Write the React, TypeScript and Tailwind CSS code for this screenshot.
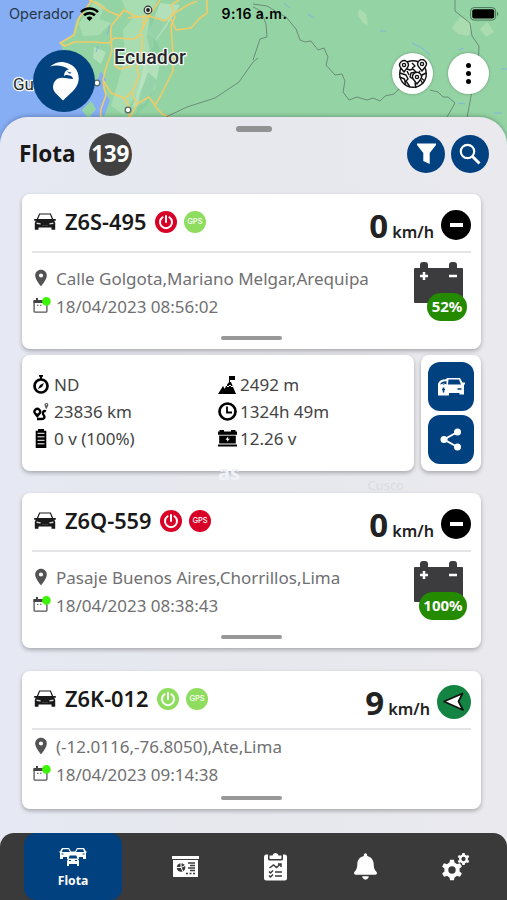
import type { ReactNode } from 'react';
import clsx from 'clsx';
import { FaBell } from 'react-icons/fa';
import { MdLocationOn } from 'react-icons/md';

type Vehicle = {
  plate: string;
  engineOn: boolean;
  gpsOn: boolean;
  speed: number;
  address: string;
  date: string;
  battery?: string;
};

const vehicles: Vehicle[] = [
  { plate: 'Z6S-495', engineOn: false, gpsOn: true, speed: 0, address: 'Calle Golgota,Mariano Melgar,Arequipa', date: '18/04/2023 08:56:02', battery: '52%' },
  { plate: 'Z6Q-559', engineOn: false, gpsOn: false, speed: 0, address: 'Pasaje Buenos Aires,Chorrillos,Lima', date: '18/04/2023 08:38:43', battery: '100%' },
  { plate: 'Z6K-012', engineOn: true, gpsOn: true, speed: 9, address: '(-12.0116,-76.8050),Ate,Lima', date: '18/04/2023 09:14:38' },
];

function MapBackground() {
  return (
    <svg className="absolute left-0 top-0" width="507" height="160" viewBox="0 0 507 160">
      <rect width="507" height="160" fill="#94d4a4" />
      <path d="M0 0H92L84 11 76 20 73 34 60 43 65 55 70 70 92 82 103 86 101 100 99 160H0Z" fill="#86aef4" />
      <path d="M101 71l5 9-4 8 8 12-6 17-8-8 4-12-5-11z" fill="#86aef4" />
      <path d="M82 110l9-9 5 8-8 10z" fill="#94d4a4" />
      <path d="M95 0l10 6-6 13 12 4-12 12-16 1-4-12zM122 0h35l-8 18 5 28-11 14 7 16-13 18-14 20-12-8 6-20 8-30-2-26 10-12-8-10z" fill="#b5e3bd" opacity=".6" />
      <path d="M160 3l20 2-14 22-10 14-8-7zM146 54l14 9-5 25-11 16-12 4 8-25zM94 47l12 5-5 12-8-6z" fill="#bfe6c5" opacity=".7" />
      <path d="M150 15l18 6-12 18 5 14-9 8-5-24zM148 72l9 8-9 24-12 12 4-22z" fill="#82c99b" opacity=".55" />
      <path d="M359 9l7 5 2 11-5-2-5-8zM460 17l12 5-3 14-11-2-6-6zM487 22l7 10-8 5-6-8z" fill="#b5e0b4" opacity=".7" />
      <g fill="none" stroke="#7eb6d9" strokeWidth="1">
        <path d="M284 3l6 5M308 14l6 4M380 31h6M412 43l10 5 8 7M458 50l6-2M501 69h6M494 113h8M458 103l7 1M110 25l-3 10M98 46l-2 6" />
      </g>
      <g fill="none" stroke="#f0cb68" strokeWidth="1.6" strokeLinejoin="round">
        <path d="M92 0L87 7 79 18 74 35 60 43 65 46 74 42 91 42 109 43 114 38 134 39 139 36 142 29 150 14 160 0" />
        <path d="M89 0l9 4 10 7 12 5 4-6 13 7 12-1 16 5 8-7 15-9 9-4M124 10l-13 16 0 13 1 12-6 17-3 12 8 13 13 5 6 10-3 24" />
        <path d="M142 34l0 15-5 18 2 9-7 16-8 7M132 93l5 11 12-7 6 8 5-8 13-26 0-17-2-28 4-9-4-12 11-7 14-17M171 19l5 11 15-2 9-10 7-5 0-13" />
        <path d="M103 82l3 13-5 14-1 12M137 104l-6 12-1 6M154 105l8 9 10 4M128 18l16-2-1 14M114 65l6 4 12-3" />
      </g>
      <g fill="none" stroke="#6c8c78" strokeWidth="1" strokeLinejoin="round">
        <path d="M258 58l-5 4-14 20-24 16-28 9-21 10M253 7l8 4 5 13 1 13-7 2-7 21M253 4l14 2 15 9 4 2 10 12 4 11 5 2 6-1 7 9 6-2 4 9-2 8 9 10 7-1 3 7-2 11 6 8 8-3 10 3 6-2 7 3 5-5 9-2 7-7 8-2M430 90l8 2 5 5 5 0 7 6-8 14M455 0l0 11 15 12 2 13 7 10-1 25-7 25-4 22" />
      </g>
      <g fill="#fff" stroke="#596b65" strokeWidth="1.3">
        <circle cx="97" cy="83" r="2.8" />
        <circle cx="128" cy="110" r="2.8" />
      </g>
      <circle cx="148" cy="10" r="3.8" fill="#d5ead8" stroke="#333" strokeWidth="1.2" />
      <circle cx="148" cy="10" r="1.9" fill="#222" />
      <g fill="#26282b" stroke="#f4f8f4" strokeWidth="2.6" paintOrder="stroke" strokeLinejoin="round" fontFamily="Roboto, sans-serif">
        <text x="114" y="64" fontSize="19.5" fontWeight="500" textLength="72">Ecuador</text>
        <text x="13" y="90" fontSize="17">Guayaquil</text>
      </g>
    </svg>
  );
}

function StatusBar() {
  return (
    <div className="flex h-7 items-center justify-between pl-[9px] pr-[7px] font-[Inter,sans-serif] text-[14px] text-[#15201b]">
      <div className="flex w-[200px] items-center gap-1.5">
        <span className="w-[65px] text-[14.5px] text-[#26374a]">Operador</span>
        <svg width="19" height="14" viewBox="0 0 19 14" fill="none" stroke="#000" strokeWidth="2.6">
          <path d="M1 5.1a12 12 0 0 1 17 0" />
          <path d="M4 8.3a8 8 0 0 1 11 0" />
          <path d="M9.500 14l-3-3.100a4.300 4.300 0 0 1 6 0z" fill="#000" stroke="none" />
        </svg>
      </div>
      <span className="-mt-px whitespace-nowrap text-[14px] font-semibold tracking-[0.5px] text-black">9:16 a.m.</span>
      <div className="flex w-[200px] justify-end">
        <svg className="-mt-px" width="30" height="14" viewBox="0 0 30 14">
          <rect x=".6" y=".6" width="25" height="12.500" rx="3.500" fill="none" stroke="#4b7558" />
          <rect x="2.200" y="2.300" width="22" height="9.200" rx="2" />
          <path d="M27 4.500q2.600 2.400 0 4.800z" fill="#4b7558" />
        </svg>
      </div>
    </div>
  );
}

function EagleLogo() {
  return (
    <div className="flex size-[62px] items-center justify-center rounded-full bg-[#02427f]">
      <svg width="62" height="62" viewBox="0 0 62 62">
        <path
          d="M17 16.500C22 12.500 27 11.500 31 12.200C40 13.500 46 20 45.700 29C45.500 34 43 38 40 41L30 50.500L22.500 43C18.500 39 19.500 31.500 25 28.500C29 26.500 34 28.500 40 29C40 26.500 37.500 25.500 34 25C33 24.700 32 25 31.500 26.500C30.500 23 32.500 20 36 19.500C31 16 24 14.500 17 16.500Z"
          fill="#fff"
        />
        <path d="M33.500 21.300l5 1.400-1.500 1.100z" fill="#02427f" />
      </svg>
    </div>
  );
}

function GlobeIcon() {
  return (
    <svg width="30" height="30" viewBox="0 0 30 30" fill="none" stroke="#111" strokeWidth="1.4" strokeLinejoin="round">
      <circle cx="15" cy="15" r="13.300" />
      <path d="M2 14l6 2 2 4-2 2 4 6M1.500 18l5 2 1 6M9 10l3 1 3-1 3 3-5 1-1 4 3 2M14 4l3 3-3 2M22 12l-2 3M28 14l-4 2-1 3 4 3M20 22l-3 2 1 5M22 20l3 5M11 16l-2-4" />
      <g fill="#fff">
        <path d="M6 13L2.500 8.500a4.300 4.300 0 1 1 7 0z" />
        <path d="M24 12l-3.500-4.500a4.300 4.300 0 1 1 7 0z" />
        <path d="M19 25l-3.500-4.500a4.400 4.400 0 1 1 7 0z" />
      </g>
      <circle cx="6" cy="6" r="1.600" />
      <circle cx="24" cy="5" r="1.600" />
      <circle cx="19" cy="18" r="1.600" />
    </svg>
  );
}

function RoundButton({ children, className }: { children: ReactNode; className: string }) {
  return <button className={clsx('flex items-center justify-center rounded-full', className)}>{children}</button>;
}

function CarIcon() {
  return (
    <svg className="w-[22px]" width="22" height="17" viewBox="0 0 22 17" fill="#191919">
      <path d="M5.200.6h11.600l2.400 5.400h2.600v1.800h-1.600l1 2V16.800h-3.700v-2.300h-13v2.300H.8v-7l1-2H.2V6h2.600z" />
      <path d="M6 1.600h10L17.800 6H4.200z" fill="#fff" />
      <path d="M2.600 9.400l4 .9v1.300l-4-.7zM19.400 9.400l-4 .9v1.300l4-.7z" fill="#ddd" />
      <path d="M8 12.500h6" stroke="#555" strokeWidth=".6" />
    </svg>
  );
}

function PowerBadge({ on }: { on: boolean }) {
  return (
    <span className={clsx('flex size-[22px] items-center justify-center rounded-full', on ? 'bg-[#8edd5f]' : 'bg-[#d80027]')}>
      <svg width="16" height="16" viewBox="0 0 16 16" fill="none" stroke="#fff" strokeWidth="2" strokeLinecap="round">
        <path d="M4.600 3.200a6 6 0 1 0 6.800 0M8 2v6" />
      </svg>
    </span>
  );
}

function GpsBadge({ on }: { on: boolean }) {
  return (
    <span className={clsx('flex size-[22px] items-center justify-center rounded-full pt-px font-[Inter,sans-serif] text-[7.500px] font-medium leading-none text-white', on ? 'bg-[#8edd5f]' : 'bg-[#d80027]')}>
      GPS
    </span>
  );
}

function CalendarIcon() {
  return (
    <svg className="-ml-px mb-[3px] w-[18px]" width="18" height="17" viewBox="0 0 18 17">
      <rect x="1.100" y="3.600" width="12.800" height="11.600" rx="1" fill="none" stroke="#555" strokeWidth="1.300" />
      <path d="M.5 3h14v3H.5zM3 1h2v3H3z" fill="#444" />
      <path d="M4 8.300h1.500M7 8.300h1.500" stroke="#777" strokeWidth="1.300" />
      <circle cx="13.400" cy="4.400" r="4.300" fill="#3bf505" />
    </svg>
  );
}

function BatteryBadge({ value }: { value: string }) {
  return (
    <div className="relative h-[59px] w-[53px]">
      <svg width="49" height="41" viewBox="0 0 49 41" fill="#3c3c3e">
        <rect y="6" width="49" height="35" rx="1" />
        <rect x="6" width="8" height="12" rx="3" />
        <rect x="35" width="8" height="12" rx="3" />
        <path d="M6 14h8M10 10v8M35 14h8" stroke="#fff" strokeWidth="2.500" />
      </svg>
      <span className={clsx('absolute bottom-0 right-0 flex h-[28px] items-center justify-center rounded-full bg-[#248a00] pb-px text-[15px] font-bold text-white', value.length > 3 ? 'w-12' : 'w-10')}>
        {value}
      </span>
    </div>
  );
}

function SpeedMarker({ moving }: { moving: boolean }) {
  if (moving) {
    return (
      <span className="flex size-[34px] items-center justify-center rounded-full bg-[#148443]">
        <svg width="24" height="22" viewBox="0 0 24 22">
          <path d="M2 10.500L20.500 2.500L16.500 10.500L21 19Z" fill="#fff" stroke="#111" strokeWidth="1.700" strokeLinejoin="round" />
        </svg>
      </span>
    );
  }
  return (
    <span className="flex size-[30px] items-center justify-center rounded-full bg-black">
      <span className="h-1 w-[13px] bg-white" />
    </span>
  );
}

function VehicleCard({ vehicle }: { vehicle: Vehicle }) {
  const moving = vehicle.speed > 0;
  return (
    <article className={clsx('flex flex-col rounded-lg bg-white px-2.5 shadow-[0_2px_4px_rgba(0,0,0,0.28)]', moving ? 'h-[138px]' : 'h-[155px]')}>
      <div className="flex h-[59px] justify-between border-b-2 border-[#e5e5e7] pl-0.5">
        <div className="flex h-[55px] items-center">
          <CarIcon />
          <h2 className="ml-[9px] mr-[8.500px] text-[21.800px] font-semibold leading-none text-[#191919]">{vehicle.plate}</h2>
          <div className="flex gap-[7px]">
            <PowerBadge on={vehicle.engineOn} />
            <GpsBadge on={vehicle.gpsOn} />
          </div>
        </div>
        <div className="flex h-[62px] items-center">
          <div className="flex items-baseline gap-1 text-[#222]">
            <span className="text-[33px] font-bold leading-none">{vehicle.speed}</span>
            <span className="text-[16.200px] font-semibold leading-none">km/h</span>
          </div>
          <div className="ml-[7px]">
            <SpeedMarker moving={moving} />
          </div>
        </div>
      </div>
      <div className="flex justify-between pl-0.5">
        <div className={clsx('flex flex-col text-[17px] text-[#707072]', moving ? 'pt-[3px]' : 'pt-3')}>
          <div className="flex h-7 items-center">
            <MdLocationOn className="mb-0.5 ml-[-3.500px] mr-[5.500px] size-5 text-[#535353]" />
            <span>{vehicle.address}</span>
          </div>
          <div className="flex h-7 items-center gap-[5px]">
            <CalendarIcon />
            <span>{vehicle.date}</span>
          </div>
        </div>
        {vehicle.battery && (
          <div className="pr-1 pt-[9px]">
            <BatteryBadge value={vehicle.battery} />
          </div>
        )}
      </div>
      <div className="mb-[9px] mt-auto h-1 w-[61px] self-center rounded-full bg-[#989898]" />
    </article>
  );
}

const stats: { icon: ReactNode; text: string }[] = [
  {
    text: 'ND',
    icon: (
      <>
        <circle cx="8" cy="11" r="6.500" fill="none" stroke="#000" strokeWidth="2.700" />
        <path d="M6 0h4v1.800H6zM7 1h2v3H7z" />
        <path d="M11 8l-2 4-4 2 2-4z" />
      </>
    ),
  },
  {
    text: '2492 m',
    icon: (
      <>
        <path d="M11 1h6v4h-5v3h-1zM8 11l3-4 2 0 5 12H8l-2-3zM5 11l5 8H0z" />
        <path d="M8 10l2 2 2-2 2 2 1-1" fill="none" stroke="#fff" strokeWidth="1" />
      </>
    ),
  },
  {
    text: '23836 km',
    icon: (
      <>
        <path d="M4.300 16L1 12a4 4 0 1 1 6.600 0z" />
        <circle cx="4.300" cy="9.800" r="1.700" fill="#fff" />
        <path d="M4 17h4.500c3.500 0 3.500-2.500 1.800-4.500-1.300-1.800.5-4.300 2.500-3" fill="none" stroke="#000" strokeWidth="2.400" />
        <path d="M13.300 7.500l-1.600-3.800a1.900 1.900 0 1 1 3.400 0z" fill="#555" />
        <circle cx="13.400" cy="2.700" r=".7" fill="#fff" />
      </>
    ),
  },
  {
    text: '1324h 49m',
    icon: (
      <g fill="none" stroke="#000">
        <circle cx="9.500" cy="9.500" r="8" strokeWidth="2.700" />
        <path d="M9 4.500v6h5" strokeWidth="1.800" />
      </g>
    ),
  },
  {
    text: '0 v (100%)',
    icon: (
      <>
        <path d="M5 0h6v1.800h2.300V19H2.700V1.800H5z" />
        <path d="M4.500 4.300h7M4.500 7.800h7M4.500 11.300h7M4.500 14.800h7" stroke="#fff" strokeWidth="1" />
      </>
    ),
  },
  {
    text: '12.26 v',
    icon: (
      <>
        <path d="M1.500 1h4.500v1.500h7V1h4.500v1.500H19V6H0V2.500h1.500zM1.200 6.300h16.600V14.500H1.200zM0 15.500h19v2H0z" />
        <path d="M0 6.200h19" stroke="#fff" strokeWidth=".7" />
        <path d="M10.200 7.500L7.500 10.800h1.800l-.4 2.200 2.900-3.200H10z" fill="#fff" />
      </>
    ),
  },
];

function VehicleDetails() {
  return (
    <div className="mt-1.5 flex gap-[7px]">
      <div className="grid h-[116px] w-[392px] auto-rows-[27px] grid-cols-[185px_1fr] rounded-lg bg-white pl-[11px] pt-4 text-[17px] text-[#444] shadow-[0_2px_4px_rgba(0,0,0,0.28)]">
        {stats.map((stat, i) => (
          <div key={stat.text} className={clsx('flex items-center', i % 2 ? 'gap-[3px]' : 'gap-[5px]')}>
            <svg width={i % 2 ? 19 : 16} height="19" viewBox={i % 2 ? '0 0 19 19' : '0 0 16 19'}>
              {stat.icon}
            </svg>
            <span>{stat.text}</span>
          </div>
        ))}
      </div>
      <div className="flex h-[116px] w-[60px] flex-col items-center gap-1 rounded-lg bg-white pt-[7px] shadow-[0_2px_4px_rgba(0,0,0,0.28)]">
        <button className="flex h-[49px] w-[46px] items-center justify-center rounded-xl bg-[#02417f]">
          <svg width="28" height="20" viewBox="0 0 28 20" fill="#fff">
            <path d="M1 8C1 4.500 4 2.500 8 2.500L10.500 1H23l2.500 4.500H28v1.500l-1 1V17.500h-4.500V16H12v2.500H1z" />
            <path d="M11.500 2.500h10.500l2 5H11zM3 7.500C4 5 6.500 4 9.500 4.200V8H3z" fill="#02417f" />
            <path d="M6.500 10.500v5M5 12.500h3M20.500 12h4" stroke="#02417f" strokeWidth="1.500" />
            <path d="M3 8Q7 6 10 8" stroke="#fff" strokeWidth="1" fill="none" />
          </svg>
        </button>
        <button className="flex h-[49px] w-[46px] items-center justify-center rounded-xl bg-[#02417f]">
          <svg width="22" height="23" viewBox="0 0 22 23" fill="#fff">
            <path d="M17.500 4L4 11.500 17.500 19" fill="none" stroke="#fff" strokeWidth="2" />
            <circle cx="17.500" cy="4" r="3.500" />
            <circle cx="4" cy="11.500" r="3.500" />
            <circle cx="17.500" cy="19" r="3.500" />
          </svg>
        </button>
      </div>
    </div>
  );
}

function FleetIcon() {
  return (
    <svg width="28" height="18" viewBox="0 0 28 18" fill="#fff">
      <path d="M3 0h7l2 3.500h4L18 0h7l2 3.500h1L27 5v6h-3V9h-4v2h-1l1 2v5h-2v-2h-8v2H8v-5l1-2H8V9H4v2H1V5L0 3.500h1z" />
      <path d="M4 1.200h5.500L11 4H2.700zM18.500 1.200H24L25.300 4H17z" fill="#02417f" />
      <path d="M10.700 7.500h6.600l1.200 3h-9z" fill="#02417f" />
      <path d="M2.500 6h2M23.500 6h2M10 12.500h2M16 12.500h2" stroke="#02417f" strokeWidth="1" />
    </svg>
  );
}

function ReportIcon() {
  return (
    <svg width="27" height="22" viewBox="0 0 27 22">
      <path d="M0 0h27v3H0zM1 4h25v17H1z" fill="#fff" />
      <circle cx="9" cy="11.500" r="4.300" fill="#3a3a3a" />
      <path d="M9 7v4.500l4-2M9 11.500l2 4M9 11.500H4" stroke="#fff" strokeWidth="1" fill="none" />
      <path d="M16 7h7M18 9.500h5M16 12h7M18 14.500h5M14 17.500h2M17.500 17.500h2M21 17.500h2" stroke="#3a3a3a" strokeWidth="1.300" />
    </svg>
  );
}

function ChecklistIcon() {
  return (
    <svg width="23" height="28" viewBox="0 0 23 28">
      <rect y="1.500" width="23" height="26" rx="2.500" fill="#fff" />
      <path d="M4 1h15v5q0 1.500-2 1.500H6Q4 7.500 4 6z" fill="#3a3a3a" />
      <path d="M5.500 2.500h3Q9 0 11.500 0T14.500 2.500h3V5q0 1-1 1h-10q-1 0-1-1z" fill="#fff" />
      <g fill="none" stroke="#3a3a3a" strokeWidth="1.500">
        <path d="M5.500 15l4-3 3 2.500 4-3.500M14 11h3v3M11 19h7M11 23h7" />
        <path d="M5 18.500l1.500 1.500L9 17.500M5 22.500l1.500 1.500L9 21.500" />
      </g>
    </svg>
  );
}

const gearTeeth = [0, 60, 120, 180, 240, 300];

function Gear({ x, y, scale }: { x: number; y: number; scale: number }) {
  return (
    <g transform={`translate(${x} ${y}) scale(${scale})`}>
      <circle r="5.700" fill="none" stroke="#fff" strokeWidth="4" />
      {gearTeeth.map((angle) => (
        <path key={angle} d="M-2.600 -7L-1.900 -10.300H1.900L2.600 -7Z" fill="#fff" transform={`rotate(${angle})`} />
      ))}
    </g>
  );
}

function BottomNav() {
  return (
    <nav className="flex h-[67px] rounded-t-[14px] bg-[#3a3a3a] pl-6">
      <button className="mr-[18px] flex w-[98px] flex-col items-center rounded-xl bg-[#02417f] pt-[15px] text-white">
        <FleetIcon />
        <span className="mt-1.5 text-[12.200px] font-bold leading-[18px]">Flota</span>
      </button>
      <button className="flex w-[90px] items-center justify-center"><ReportIcon /></button>
      <button className="flex w-[90px] items-center justify-center"><ChecklistIcon /></button>
      <button className="flex w-[90px] items-center justify-center text-white">
        <FaBell className="h-[27px] w-[23px]" />
      </button>
      <button className="flex w-[90px] items-center justify-center">
        <svg className="ml-0.5" width="28" height="28" viewBox="0 0 28 28">
          <Gear x={10} y={17} scale={1} />
          <Gear x={21.500} y={6} scale={0.58} />
        </svg>
      </button>
    </nav>
  );
}

export default function App() {
  return (
    <div className="relative flex h-[900px] w-[507px] flex-col overflow-hidden bg-[#e7e9f2] font-['Noto_Sans',sans-serif]">
      <MapBackground />
      <div className="relative flex h-[117px] shrink-0 flex-col">
        <StatusBar />
        <div className="flex items-start justify-between pl-[33px] pr-[18px] pt-[22px]">
          <EagleLogo />
          <div className="flex gap-[15px] pt-[3px]">
            <RoundButton className="size-[41px] bg-white shadow-[0_0_3px_rgba(0,0,0,0.3)]"><GlobeIcon /></RoundButton>
            <RoundButton className="size-[41px] bg-white shadow-[0_0_3px_rgba(0,0,0,0.3)]">
              <span className="flex flex-col gap-[3px]">
                <span className="size-[5px] rounded-full bg-black" />
                <span className="size-[5px] rounded-full bg-black" />
                <span className="size-[5px] rounded-full bg-black" />
              </span>
            </RoundButton>
          </div>
        </div>
      </div>
      <main className="relative flex grow flex-col rounded-t-[28px] bg-linear-to-r from-[#e6e9f3] via-[#e7e8ed] to-[#e9e9ee] shadow-[0_-1px_4px_rgba(0,0,0,0.25)]">
        <div className="mt-[9px] h-1.5 w-9 self-center rounded-full bg-[#929294]" />
        <header className="flex h-[44px] items-center justify-between pl-[19px] pr-[18px]">
          <div className="flex items-center gap-[13px]">
            <h1 className="text-[22.600px] font-bold leading-none text-[#191919]">Flota</h1>
            <span className="flex size-[43px] items-center justify-center rounded-full bg-[#414141] text-[22.500px] font-bold tracking-[-0.3px] text-white">139</span>
          </div>
          <div className="flex gap-1.5">
            <RoundButton className="size-[38px] bg-[#02417f]">
              <svg width="19" height="22" viewBox="0 0 19 22" fill="#fff">
                <path d="M0 .5h19v1.500L12.700 10V21L6.300 18V10L0 2z" />
              </svg>
            </RoundButton>
            <RoundButton className="size-[38px] bg-[#02417f]">
              <svg width="22" height="22" viewBox="0 0 22 22" fill="none" stroke="#fff">
                <circle cx="8.500" cy="8.500" r="6.700" strokeWidth="2.200" />
                <path d="M13.500 13.500l7 7" strokeWidth="3" />
              </svg>
            </RoundButton>
          </div>
        </header>
        <div className="flex flex-col pl-[22px] pr-[26px] pt-[18px]">
          <VehicleCard vehicle={vehicles[0]} />
          <VehicleDetails />
          {/* place names of the map showing through the sheet */}
          <div className="flex h-[22px] items-start justify-between pl-[196px] pr-[77px] leading-none">
            <span className="-mt-2 text-xl font-bold leading-none text-[#f0f2f8]">as</span>
            <span className="mt-2 text-[13px] leading-none text-[#dadbe0]">Cusco</span>
          </div>
          <div className="flex flex-col gap-[23px]">
            <VehicleCard vehicle={vehicles[1]} />
            <VehicleCard vehicle={vehicles[2]} />
          </div>
        </div>
        <div className="mt-auto">
          <BottomNav />
        </div>
      </main>
    </div>
  );
}
